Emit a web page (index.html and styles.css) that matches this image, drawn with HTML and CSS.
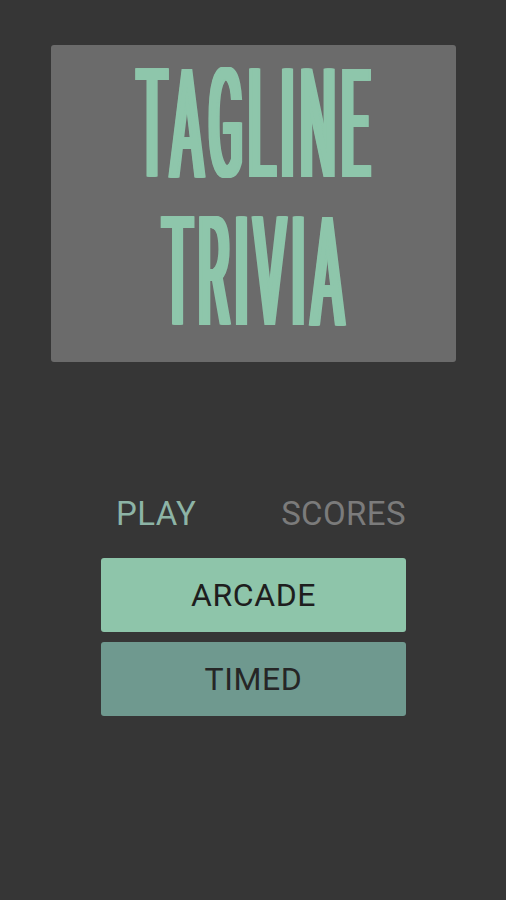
FILE: index.html
```html
<!DOCTYPE html>
<html lang="en">
<head>
<meta charset="utf-8">
<title>Tagline Trivia</title>
<link rel="stylesheet" href="styles.css">
</head>
<body>
<main class="screen">
  <header class="logo">
    <span class="logo-line">TAGLINE</span>
    <span class="logo-line">TRIVIA</span>
  </header>
  <nav class="tabs">
    <span class="tab tab-active">PLAY</span>
    <span class="tab">SCORES</span>
  </nav>
  <div class="modes">
    <button class="mode mode-arcade">ARCADE</button>
    <button class="mode mode-timed">TIMED</button>
  </div>
</main>
</body>
</html>
```
FILE: styles.css
```css
html, body {
  margin: 0;
  padding: 0;
  background: #363636;
}
body {
  width: 506px;
  height: 900px;
  overflow: hidden;
  font-family: Roboto, "Liberation Sans", sans-serif;
}
.screen {
  display: flex;
  flex-direction: column;
  align-items: center;
  padding-top: 45px;
}
.logo {
  width: 405px;
  height: 317px;
  box-sizing: border-box;
  padding-top: 6px;
  margin-left: 1px;
  background: #6b6b6b;
  border-radius: 3px;
  display: flex;
  flex-direction: column;
  align-items: center;
}
.logo-line {
  display: block;
  white-space: nowrap;
  font-family: Roboto, sans-serif;
  font-weight: 400;
  font-size: 152px;
  line-height: 148px;
  letter-spacing: 18px;
  padding-left: 18px;
  color: #8ec6ab;
  transform: scaleX(0.326);
  text-shadow:
    -10px 0 0 #8ec6ab, -8px 0 0 #8ec6ab, -6px 0 0 #8ec6ab, -4px 0 0 #8ec6ab, -2px 0 0 #8ec6ab,
    2px 0 0 #8ec6ab, 4px 0 0 #8ec6ab, 6px 0 0 #8ec6ab, 8px 0 0 #8ec6ab, 10px 0 0 #8ec6ab;
}
.tabs {
  width: 305px;
  box-sizing: border-box;
  margin-top: 136px;
  margin-left: 1px;
  padding-left: 15px;
  display: flex;
  justify-content: space-between;
}
.tab {
  font-size: 33px;
  line-height: 32px;
  letter-spacing: 0.4px;
  color: #7b7b7b;
}
.tab-active {
  color: #8db4a6;
}
.modes {
  width: 305px;
  margin-top: 28px;
  margin-left: 1px;
  display: flex;
  flex-direction: column;
  gap: 10px;
}
.mode {
  height: 74px;
  border: none;
  border-radius: 3px;
  padding: 0;
  font-family: Roboto, sans-serif;
  font-size: 32px;
  letter-spacing: 0.6px;
  color: #1e1e1e;
  cursor: pointer;
}
.mode-arcade {
  background: #8ec5aa;
}
.mode-timed {
  background: #6f998f;
  color: #262626;
}
```
